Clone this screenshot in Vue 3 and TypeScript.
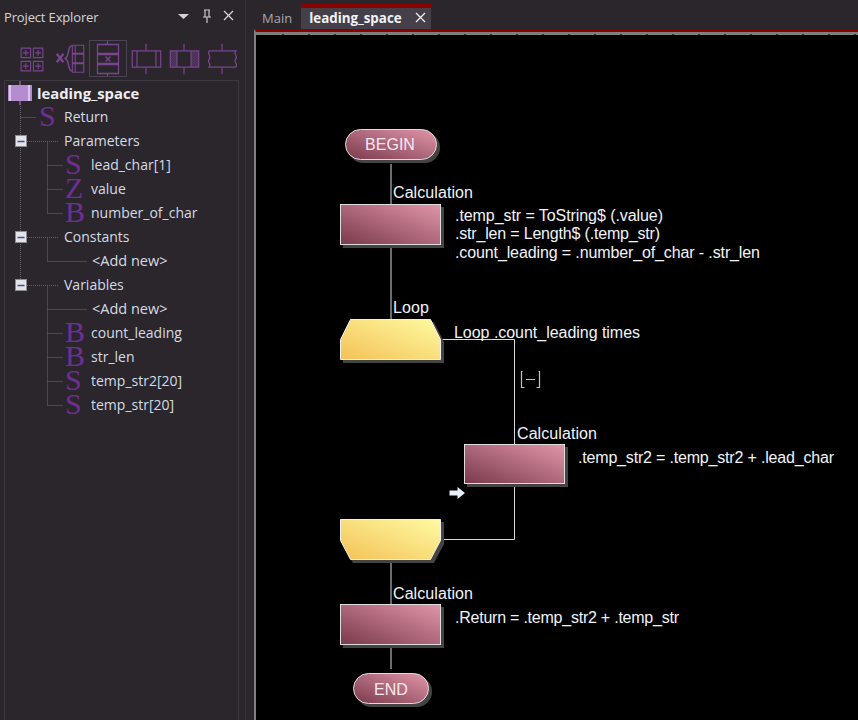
<script setup lang="ts">
interface TreeRow {
  label: string
  kind: 'lvl1' | 'section' | 'lvl2' | 'add'
  letter?: string
}

const rows: TreeRow[] = [
  { label: 'Return', kind: 'lvl1', letter: 'S' },
  { label: 'Parameters', kind: 'section' },
  { label: 'lead_char[1]', kind: 'lvl2', letter: 'S' },
  { label: 'value', kind: 'lvl2', letter: 'Z' },
  { label: 'number_of_char', kind: 'lvl2', letter: 'B' },
  { label: 'Constants', kind: 'section' },
  { label: '<Add new>', kind: 'add' },
  { label: 'Variables', kind: 'section' },
  { label: '<Add new>', kind: 'add' },
  { label: 'count_leading', kind: 'lvl2', letter: 'B' },
  { label: 'str_len', kind: 'lvl2', letter: 'B' },
  { label: 'temp_str2[20]', kind: 'lvl2', letter: 'S' },
  { label: 'temp_str[20]', kind: 'lvl2', letter: 'S' },
]

// y centre of each +/- box, relative to the tree box
const boxes = [61, 157, 205]

const calcBlocks = [
  { x: 340, y: 204, w: 101, h: 41 },
  { x: 464, y: 444, w: 101, h: 40 },
  { x: 340, y: 604, w: 101, h: 41 },
]

// widths measured on the chart, the app's font runs a little tighter than Arial
const chartLabels = [
  { x: 393, y: 198, w: 80, text: 'Calculation' },
  { x: 455, y: 221, w: 208, text: '.temp_str = ToString$ (.value)' },
  { x: 455, y: 239, w: 205, text: '.str_len = Length$ (.temp_str)' },
  { x: 455, y: 258, w: 305, text: '.count_leading = .number_of_char - .str_len' },
  { x: 393, y: 313, w: 36, text: 'Loop' },
  { x: 454, y: 338, w: 186, text: 'Loop .count_leading times' },
  { x: 517, y: 439, w: 80, text: 'Calculation' },
  { x: 578, y: 463, w: 256, text: '.temp_str2 = .temp_str2 + .lead_char' },
  { x: 393, y: 599, w: 80, text: 'Calculation' },
  { x: 455, y: 623, w: 224, text: '.Return = .temp_str2 + .temp_str' },
]
</script>

<template>
  <div class="app">
    <aside class="explorer">
      <header class="explorer-title">
        <span class="title-text">Project Explorer</span>
        <span class="grip"></span>
        <svg class="title-icons" width="66" height="20" viewBox="0 0 66 20">
          <path d="M0 7h11l-5.500 5z" fill="#d5d5d8" />
          <path d="M26 3h6M27 3v7h4V3M25 10h8M29 10v6" fill="none" stroke="#c9c9cc" stroke-width="1.200" />
          <path d="M46 4l9 9M55 4l-9 9" fill="none" stroke="#d5d5d8" stroke-width="1.300" />
        </svg>
      </header>

      <div class="toolbar">
        <button class="tool">
          <svg width="38" height="38" viewBox="0 0 38 38">
            <g fill="none" stroke="#7a4490" stroke-width="1.200">
              <path d="M7.500 7.500h10v10h-10zM20.500 7.500h10v10h-10zM7.500 21.500h10v10h-10zM20.500 21.500h10v10h-10z" />
              <path d="M9.500 12.500h6M12.500 9.500v6M22.500 12.500h6M25.500 9.500v6M9.500 26.500h6M12.500 23.500v6M22.500 26.500h6M25.500 23.500v6" />
            </g>
          </svg>
        </button>
        <button class="tool">
          <svg width="38" height="38" viewBox="0 0 38 38">
            <path d="M5 13.500l7 9M12 13.500l-7 9" fill="none" stroke="#7a4490" stroke-width="2.400" />
            <path d="M21 5c-5 0-2 11-7 13.500 5 2.500 2 11.500 7 13.500" fill="none" stroke="#7a4490" stroke-width="1.600" />
            <path d="M21.500 4.500h12v8.500h-12zM21.500 14h12v9h-12zM21.500 24h12v9h-12zM24.500 4.500v8.500M24.500 14v9M24.500 24v9" fill="none" stroke="#7a4490" stroke-width="1.200" />
          </svg>
        </button>
        <button class="tool tool-active">
          <svg width="36" height="35" viewBox="0 0 36 35">
            <path d="M17.500 0v3M17.500 33v2" stroke="#7a4490" stroke-width="1.200" />
            <path d="M7.500 3.500h21v9h-21zM7.500 13.500h21v9h-21zM7.500 23.500h21v9h-21z" fill="none" stroke="#7a4490" stroke-width="1.300" />
            <path d="M15.500 15.500l5 5M20.500 15.500l-5 5" stroke="#7a4490" stroke-width="1.400" />
          </svg>
        </button>
        <button class="tool">
          <svg width="38" height="38" viewBox="0 0 38 38">
            <path d="M19 3v7M19 28v7" stroke="#7a4490" stroke-width="1.300" />
            <path d="M4.500 10.500h30v17h-30zM9.500 10.500v17M29.500 10.500v17" fill="none" stroke="#7a4490" stroke-width="1.300" />
          </svg>
        </button>
        <button class="tool">
          <svg width="38" height="38" viewBox="0 0 38 38">
            <defs>
              <pattern id="hatch" width="3" height="3" patternUnits="userSpaceOnUse">
                <rect width="3" height="3" fill="#2f2833" />
                <rect width="1.500" height="1.500" fill="#6a3f7c" />
                <rect x="1.500" y="1.500" width="1.500" height="1.500" fill="#6a3f7c" />
              </pattern>
            </defs>
            <path d="M19 3v7M19 28v7" stroke="#7a4490" stroke-width="1.300" />
            <rect x="4.500" y="10.500" width="7" height="17" fill="url(#hatch)" />
            <rect x="26.500" y="10.500" width="8" height="17" fill="url(#hatch)" />
            <path d="M4.500 10.500h30v17h-30zM11.500 10.500v17M26.500 10.500v17" fill="none" stroke="#7a4490" stroke-width="1.300" />
          </svg>
        </button>
        <button class="tool">
          <svg width="38" height="38" viewBox="0 0 38 38">
            <path d="M19 3v7M19 28v7" stroke="#7a4490" stroke-width="1.300" />
            <path d="M5.500 10.500h28c-3 3 3 5.500 0 8.500s3 5.500 0 8.500h-28c3-3-3-5.500 0-8.500s-3-5.500 0-8.500z" fill="none" stroke="#7a4490" stroke-width="1.300" />
          </svg>
        </button>
      </div>

      <div class="tree">
        <svg class="tree-lines" width="232" height="340" viewBox="0 0 232 340">
          <g stroke="#6c6870" stroke-dasharray="1 1" fill="none">
            <path d="M15.500 24V205" />
            <path d="M15.500 37.500H31" />
            <path d="M42.500 61.500V133.500M42.500 85.500H58M42.500 109.500H58M42.500 133.500H58" />
            <path d="M42.500 157.500V181.500H82" />
            <path d="M42.500 205.500V325.500M42.500 229.500H82M42.500 253.500H58M42.500 277.500H58M42.500 301.500H58M42.500 325.500H58" />
          </g>
          <g stroke="#7b4f8c" stroke-dasharray="1 1" fill="none">
            <path d="M22 61.500H53M22 157.500H53M22 205.500H53" />
          </g>
          <g v-for="y in boxes" :key="y">
            <rect x="10.500" :y="y - 5.500" width="11" height="11" fill="#e4e4e8" stroke="#8c8c90" />
            <path :d="`M12.500 ${y + 0.5}h7`" stroke="#3d4f9c" stroke-width="1.500" />
          </g>
        </svg>
        <div class="tree-root">
          <svg class="root-icon" width="26" height="24" viewBox="0 0 26 24">
            <path d="M13 0v24" stroke="#8d5aa6" stroke-width="1.500" />
            <rect x="1" y="4" width="24" height="16" fill="#b48ccf" />
            <path d="M3 4v16M22 4v16" stroke="#e8dcf2" stroke-width="1.500" />
          </svg>
          <span class="root-label">leading_space</span>
        </div>
        <div v-for="row in rows" :key="row.label + row.kind" class="tree-row" :class="row.kind">
          <span v-if="row.letter" class="letter">{{ row.letter }}</span>
          <span class="row-label">{{ row.label }}</span>
        </div>
      </div>
    </aside>

    <main class="editor">
      <nav class="tabs">
        <span class="tab">Main</span>
        <span class="tab tab-active">
          leading_space
          <svg width="11" height="11" viewBox="0 0 11 11">
            <path d="M1 1l9 9M10 1l-9 9" stroke="#f0f0f0" stroke-width="1.300" />
          </svg>
        </span>
      </nav>
      <div class="canvas">
        <div class="ruler"></div>
        <svg class="chart" width="602" height="688" viewBox="256 35 602 688">
          <defs>
            <linearGradient id="calc" x1="0" y1="1" x2="1" y2="0">
              <stop offset="0" stop-color="#7a394c" />
              <stop offset="1" stop-color="#e196a9" />
            </linearGradient>
            <linearGradient id="loop" x1="0" y1="1" x2="1" y2="0">
              <stop offset="0" stop-color="#f3c257" />
              <stop offset="1" stop-color="#fffaa2" />
            </linearGradient>
          </defs>

          <g fill="none" stroke="#d8d8d8" stroke-width="1">
            <path d="M391 164V204M391 245V319M391 560V604M391 645V669" />
            <path d="M441 339.500H514.500V444M514.500 484V539.500H441" />
          </g>

          <rect x="348" y="132" width="92" height="31" rx="15.500" fill="#444" />
          <rect x="345.500" y="129.500" width="91" height="30" rx="15" fill="url(#calc)" stroke="#ddd" />
          <text class="shape-label" x="390" y="150" text-anchor="middle">BEGIN</text>

          <g v-for="b in calcBlocks" :key="b.y">
            <rect :x="b.x + 3" :y="b.y + 3" :width="b.w" :height="b.h" fill="#444" />
            <rect :x="b.x + 0.5" :y="b.y + 0.5" :width="b.w - 1" :height="b.h - 1" fill="url(#calc)" stroke="#ddd" />
          </g>

          <path d="M343 342l10-20h81l10 20v21H343z" fill="#444" />
          <path d="M340.500 339.500l10-20h80l10 20v20h-100z" fill="url(#loop)" stroke="#eee" />

          <path d="M343 522h101v22l-10 19h-81l-10-19z" fill="#444" />
          <path d="M340.500 519.500h100v21l-10 19h-80l-10-19z" fill="url(#loop)" stroke="#eee" />

          <rect x="356" y="676" width="76" height="31" rx="15.500" fill="#444" />
          <rect x="353.500" y="673.500" width="75" height="30" rx="15" fill="url(#calc)" stroke="#ddd" />
          <text class="shape-label" x="391" y="695" text-anchor="middle">END</text>

          <g class="chart-text">
            <text v-for="l in chartLabels" :key="l.y" :x="l.x" :y="l.y" :textLength="l.w">{{ l.text }}</text>
          </g>

          <path d="M522.500 371.500h-1v16h3M538.500 371.500h1v16h-3M526 379.500h9" fill="none" stroke="#c4c4c4" stroke-width="1.200" />
          <path d="M449.500 490.500h8v-3.500l7.500 6-7.500 6v-3.500h-8z" fill="#e8f0fa" />
        </svg>
      </div>
    </main>
  </div>
</template>

<style scoped>
.app {
  display: flex;
  width: 858px;
  height: 720px;
  overflow: hidden;
  background: #2a262c;
  font-family: "Open Sans", "Noto Sans", sans-serif;
}

.explorer {
  display: flex;
  flex-direction: column;
  flex: none;
  width: 246px;
  box-sizing: border-box;
  border-right: 1px solid #353138;
}

.explorer-title {
  display: flex;
  align-items: center;
  height: 33px;
  padding-left: 4px;
  color: #d6d6d8;
  font-size: 13px;
  letter-spacing: -0.15px;
}

.title-text {
  width: 104px;
}

.grip {
  width: 60px;
  height: 5px;
  margin-right: 10px;
  background-image: radial-gradient(#56525a 40%, transparent 45%);
  background-size: 2px 2px;
}

.title-icons {
  flex: none;
}

.toolbar {
  display: flex;
  height: 47px;
  padding: 7px 0 0 13px;
  box-sizing: border-box;
}

.tool {
  display: flex;
  align-items: center;
  justify-content: center;
  width: 38px;
  height: 38px;
  padding: 0;
  background: none;
  border: 1px solid transparent;
}

.tool-active {
  height: 37px;
  border-color: #4a4456;
}

.tree {
  position: relative;
  flex: 1;
  margin-left: 4px;
  width: 235px;
  box-sizing: border-box;
  border: 1px solid #3c3a40;
  border-bottom: none;
  color: #d5dbe4;
  font-size: 14px;
}

.tree-lines {
  position: absolute;
  top: -1px;
  left: 0;
  pointer-events: none;
}

.tree-root,
.tree-row {
  position: relative;
  display: flex;
  align-items: center;
  height: 24px;
  line-height: 24px;
}

.tree-root {
  padding-left: 2px;
}

.root-icon {
  flex: none;
  margin-right: 4px;
}

.root-label {
  font-size: 14.800px;
  font-weight: 700;
  color: #eceef2;
}

.tree-row.lvl1 {
  padding-left: 34px;
}

.tree-row.section {
  padding-left: 59px;
}

.tree-row.lvl2 {
  padding-left: 60px;
}

.tree-row.add {
  padding-left: 87px;
  font-size: 14.500px;
}

.letter {
  flex: none;
  width: 26px;
  margin-top: -2px;
  color: #6f2f94;
  font-family: "Liberation Serif", serif;
  font-size: 30px;
  line-height: 24px;
}

.tree-row.lvl1 .letter {
  width: 25px;
}

.editor {
  display: flex;
  flex-direction: column;
  flex: 1;
  min-width: 0;
}

.tabs {
  display: flex;
  align-items: flex-end;
  flex: none;
  height: 29px;
  padding-left: 7px;
}

.tab {
  display: flex;
  align-items: center;
  height: 21px;
  padding: 0 9px 2px;
  box-sizing: border-box;
  color: #a3a8b0;
  font-size: 13px;
}

.tab-active {
  gap: 13px;
  height: 25px;
  padding: 0 5px 2px 8px;
  background: #453f4a;
  border-top: 4px solid #8b0000;
  color: #f2f2f4;
  font-size: 13.400px;
  font-weight: 700;
}

.canvas {
  flex: 1;
  min-height: 0;
  margin-left: 8px;
  background: #000;
  border-top: 3px solid #8b0000;
  border-left: 2px solid #7f7f7f;
}

.ruler {
  height: 3px;
  background:
    repeating-linear-gradient(90deg, #333 0 2px, transparent 2px 26px) 26px bottom / 100% 1px no-repeat,
    #7f7f7f;
}

.chart {
  display: block;
}

.chart-text text {
  fill: #f2f4f8;
  font-family: "Liberation Sans", Arial, sans-serif;
  font-size: 16px;
}

.shape-label {
  fill: #f6e9ee;
  font-family: "Liberation Sans", Arial, sans-serif;
  font-size: 16px;
}
</style>
